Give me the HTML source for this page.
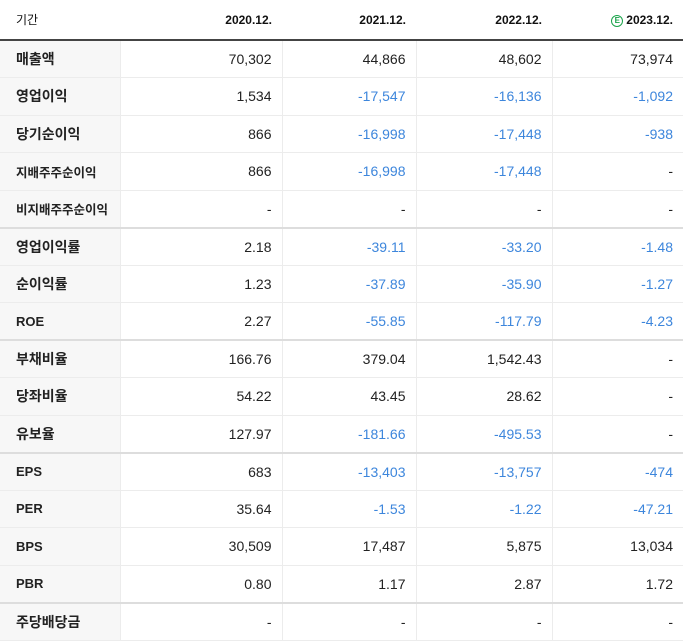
<!DOCTYPE html><html><head><meta charset="utf-8"><style>
body{margin:0;background:#fff;font-family:"Liberation Sans","Noto Sans CJK KR",sans-serif;}
table{border-collapse:collapse;width:683px;table-layout:fixed}
td,th{height:37.5px;padding:0 10px 0 0;text-align:right;font-size:14px;color:#222;border-bottom:1px solid #ececec;border-left:1px solid #ececec;box-sizing:border-box}
th{height:40px;font-size:12px;font-weight:bold;border-bottom:2px solid #444;border-left:none;color:#111}
td:first-child,th:first-child{text-align:left;padding-left:16px;border-left:none}
td:first-child{background:#f7f7f7;font-weight:bold;font-size:14px;color:#222}
th:first-child{font-weight:normal}
td.s{font-size:12.5px}
td.e{font-size:13px}
.b{color:#3d86dc}
tr.g td{border-bottom:2px solid #ddd}
.ic{display:inline-block;width:10px;height:10px;border:1px solid #1aa34a;border-radius:50%;color:#1aa34a;font-size:8px;line-height:10px;text-align:center;vertical-align:1px;margin-right:3px;font-weight:bold}
</style></head><body><table>
<colgroup><col style="width:120px"><col style="width:162px"><col style="width:134px"><col style="width:136px"><col style="width:131px"></colgroup>
<tr><th>기간</th><th>2020.12.</th><th>2021.12.</th><th>2022.12.</th><th><span class="ic">E</span>2023.12.</th></tr>
<tr><td>매출액</td><td>70,302</td><td>44,866</td><td>48,602</td><td>73,974</td></tr>
<tr><td>영업이익</td><td>1,534</td><td class="b">-17,547</td><td class="b">-16,136</td><td class="b">-1,092</td></tr>
<tr><td>당기순이익</td><td>866</td><td class="b">-16,998</td><td class="b">-17,448</td><td class="b">-938</td></tr>
<tr><td class="s">지배주주순이익</td><td>866</td><td class="b">-16,998</td><td class="b">-17,448</td><td>-</td></tr>
<tr class="g"><td class="s">비지배주주순이익</td><td>-</td><td>-</td><td>-</td><td>-</td></tr>
<tr><td>영업이익률</td><td>2.18</td><td class="b">-39.11</td><td class="b">-33.20</td><td class="b">-1.48</td></tr>
<tr><td>순이익률</td><td>1.23</td><td class="b">-37.89</td><td class="b">-35.90</td><td class="b">-1.27</td></tr>
<tr class="g"><td class="e">ROE</td><td>2.27</td><td class="b">-55.85</td><td class="b">-117.79</td><td class="b">-4.23</td></tr>
<tr><td>부채비율</td><td>166.76</td><td>379.04</td><td>1,542.43</td><td>-</td></tr>
<tr><td>당좌비율</td><td>54.22</td><td>43.45</td><td>28.62</td><td>-</td></tr>
<tr class="g"><td>유보율</td><td>127.97</td><td class="b">-181.66</td><td class="b">-495.53</td><td>-</td></tr>
<tr><td class="e">EPS</td><td>683</td><td class="b">-13,403</td><td class="b">-13,757</td><td class="b">-474</td></tr>
<tr><td class="e">PER</td><td>35.64</td><td class="b">-1.53</td><td class="b">-1.22</td><td class="b">-47.21</td></tr>
<tr><td class="e">BPS</td><td>30,509</td><td>17,487</td><td>5,875</td><td>13,034</td></tr>
<tr class="g"><td class="e">PBR</td><td>0.80</td><td>1.17</td><td>2.87</td><td>1.72</td></tr>
<tr><td>주당배당금</td><td>-</td><td>-</td><td>-</td><td>-</td></tr>
</table></body></html>
